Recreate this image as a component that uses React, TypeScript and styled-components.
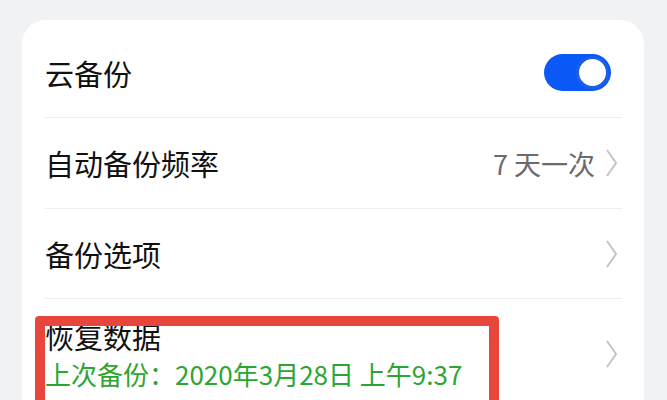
import React from "react";
import styled, { createGlobalStyle } from "styled-components";

const GlobalStyle = createGlobalStyle`
	html, body {
		margin: 0;
		padding: 0;
		background: #f1f2f4;
		font-family: "Noto Sans CJK SC", "Noto Sans", sans-serif;
		overflow: hidden;
	}
`;

const Page = styled.div`
	width: 667px;
	height: 400px;
	padding: 20px 23px 0 22px;
	box-sizing: border-box;
	background: #f1f2f4;
	overflow: hidden;
`;

const Card = styled.div`
	position: relative;
	background: #ffffff;
	border-radius: 24px 24px 0 0;
	padding-top: 8px;
	height: 372px;
`;

const Row = styled.div<{ $h: number }>`
	display: flex;
	align-items: center;
	justify-content: space-between;
	height: ${(p) => p.$h}px;
	margin: 0 22px;
	padding: 0 4px 0 1px;
	border-bottom: 1px solid #eeeeee;
	&:last-child {
		border-bottom: none;
		align-items: flex-start;
		padding-top: 28px;
	}
`;

const TextCol = styled.div`
	display: flex;
	flex-direction: column;
	gap: 3px;
`;

const Title = styled.div`
	font-size: 29px;
	color: #111111;
	line-height: 36px;
`;

const Sub = styled.div`
	font-size: 26px;
	color: #2ea531;
	line-height: 34px;
`;

const Right = styled.div`
	display: flex;
	align-items: center;
	gap: 10px;
`;

const Value = styled.span`
	font-size: 27px;
	color: #6b6b6b;
`;

const ChevronSlot = styled.div`
	display: flex;
	align-items: center;
	height: 52px;
`;

const Toggle = styled.div`
	width: 67px;
	height: 37px;
	border-radius: 19px;
	background: #0a59f7;
	display: flex;
	align-items: center;
	justify-content: flex-end;
	padding: 0 2px;
	box-sizing: border-box;
	margin-right: 7px;
`;

const Knob = styled.div`
	width: 33px;
	height: 33px;
	border-radius: 50%;
	background: #ffffff;
	border: 3px solid #1a5fe8;
	box-sizing: border-box;
`;

const Highlight = styled.div`
	position: absolute;
	left: 13px;
	top: 296px;
	width: 444px;
	height: 120px;
	border: 10px solid #e8453c;
	border-radius: 4px;
	pointer-events: none;
`;

const Chevron = () => (
	<svg width="13" height="30" viewBox="0 0 13 30">
		<path d="M2 2 L11 15 L2 28" fill="none" stroke="#c4c4c4" strokeWidth="2" />
	</svg>
);

const App = () => {
	return (
		<>
			<GlobalStyle />
			<Page>
				<Card>
					<Row $h={89}>
						<Title>云备份</Title>
						<Toggle>
							<Knob />
						</Toggle>
					</Row>
					<Row $h={90}>
						<Title>自动备份频率</Title>
						<Right>
							<Value>7 天一次</Value>
							<Chevron />
						</Right>
					</Row>
					<Row $h={89}>
						<Title>备份选项</Title>
						<Chevron />
					</Row>
					<Row $h={110}>
						<TextCol>
							<Title>恢复数据</Title>
							<Sub>上次备份：2020年3月28日 上午9:37</Sub>
						</TextCol>
						<ChevronSlot>
							<Chevron />
						</ChevronSlot>
					</Row>
					<Highlight />
				</Card>
			</Page>
		</>
	);
};

export default App;
